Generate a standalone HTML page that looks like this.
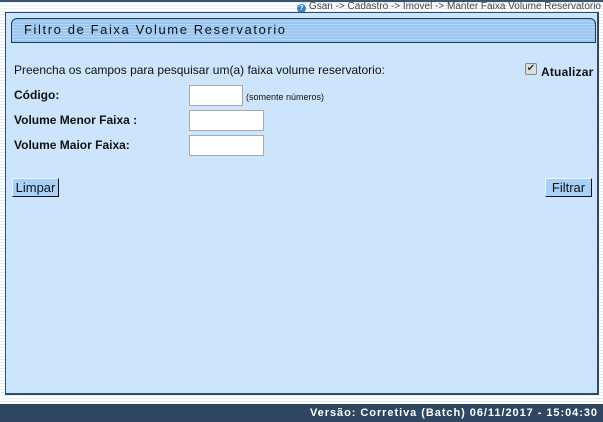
<!DOCTYPE html>
<html><head><meta charset="utf-8"><style>
*{margin:0;padding:0;box-sizing:border-box}
body{width:603px;height:422px;overflow:hidden;background:#fff;font-family:"Liberation Sans",Arial,sans-serif;position:relative;
background-image:repeating-linear-gradient(#fff 0 2px,#e3edf6 2px 3px);}
.top{position:absolute;left:0;top:0;width:603px;height:2px;background:#3a5270}
.crumb{position:absolute;right:2px;top:1px;font-size:10px;color:#444;white-space:nowrap;line-height:11px}
.crumb i{display:inline-block;width:9px;height:9px;border-radius:50%;background:#3d7fc8;color:#fff;font-size:7px;font-style:normal;text-align:center;line-height:9px;vertical-align:-1px;margin-right:3px;font-weight:bold}
.panel{position:absolute;left:5px;top:12px;width:594px;height:383px;background:#cce4fc;border:1px solid #2f4a66;border-right:2px solid #2f4a66;border-bottom:2px solid #2f4a66}
.hdr{position:absolute;left:5px;top:5px;width:585px;height:25px;border:1px solid #1e3a5a;border-radius:6px 6px 0 0;
background:repeating-linear-gradient(#9cc6f2 0 2px,#b5d6f7 2px 3px);font-size:13px;letter-spacing:1.6px;color:#111;padding:3px 0 0 12px}
.t{position:absolute;font-size:12px;color:#111}
.b{font-weight:bold}
.inp{position:absolute;background:#fff;border:1px solid #a9a9a9;height:21px}
.btn{position:absolute;height:19px;background:#a9d0f7;border:1px solid #111;border-top-color:#eaf4ff;border-left-color:#eaf4ff;font-size:13px;color:#111;text-align:center;line-height:17px}
.chk{position:absolute;left:525px;top:63px;width:12px;height:12px;background:#ddd;border:1px solid #888;border-radius:2px;font-size:10px;line-height:10px;text-align:center;color:#333}
.foot{position:absolute;left:0;top:404px;width:603px;height:18px;background:#2f4760;color:#fff;font-size:11px;font-weight:bold;letter-spacing:0.95px;text-align:right;padding-right:5px;line-height:18px}
</style></head><body>
<div class="top"></div>
<div class="crumb"><i>?</i>Gsan -&gt; Cadastro -&gt; Imovel -&gt; Manter Faixa Volume Reservatorio</div>
<div class="panel"><div class="hdr">Filtro de Faixa Volume Reservatorio</div></div>
<div class="t" style="left:14px;top:63px">Preencha os campos para pesquisar um(a) faixa volume reservatorio:</div>
<div class="chk">✔</div>
<div class="t b" style="left:541px;top:65px;font-size:12px;letter-spacing:0.2px">Atualizar</div>
<div class="t b" style="left:14px;top:88px">Código:</div>
<div class="inp" style="left:189px;top:85px;width:54px"></div>
<div class="t" style="left:246px;top:92px;font-size:9px">(somente números)</div>
<div class="t b" style="left:14px;top:113px">Volume Menor Faixa :</div>
<div class="inp" style="left:189px;top:110px;width:75px"></div>
<div class="t b" style="left:14px;top:138px">Volume Maior Faixa:</div>
<div class="inp" style="left:189px;top:135px;width:75px"></div>
<div class="btn" style="left:12px;top:178px;width:47px">Limpar</div>
<div class="btn" style="left:545px;top:178px;width:47px">Filtrar</div>
<div class="foot">Versão: Corretiva (Batch) 06/11/2017 - 15:04:30</div>
</body></html>
